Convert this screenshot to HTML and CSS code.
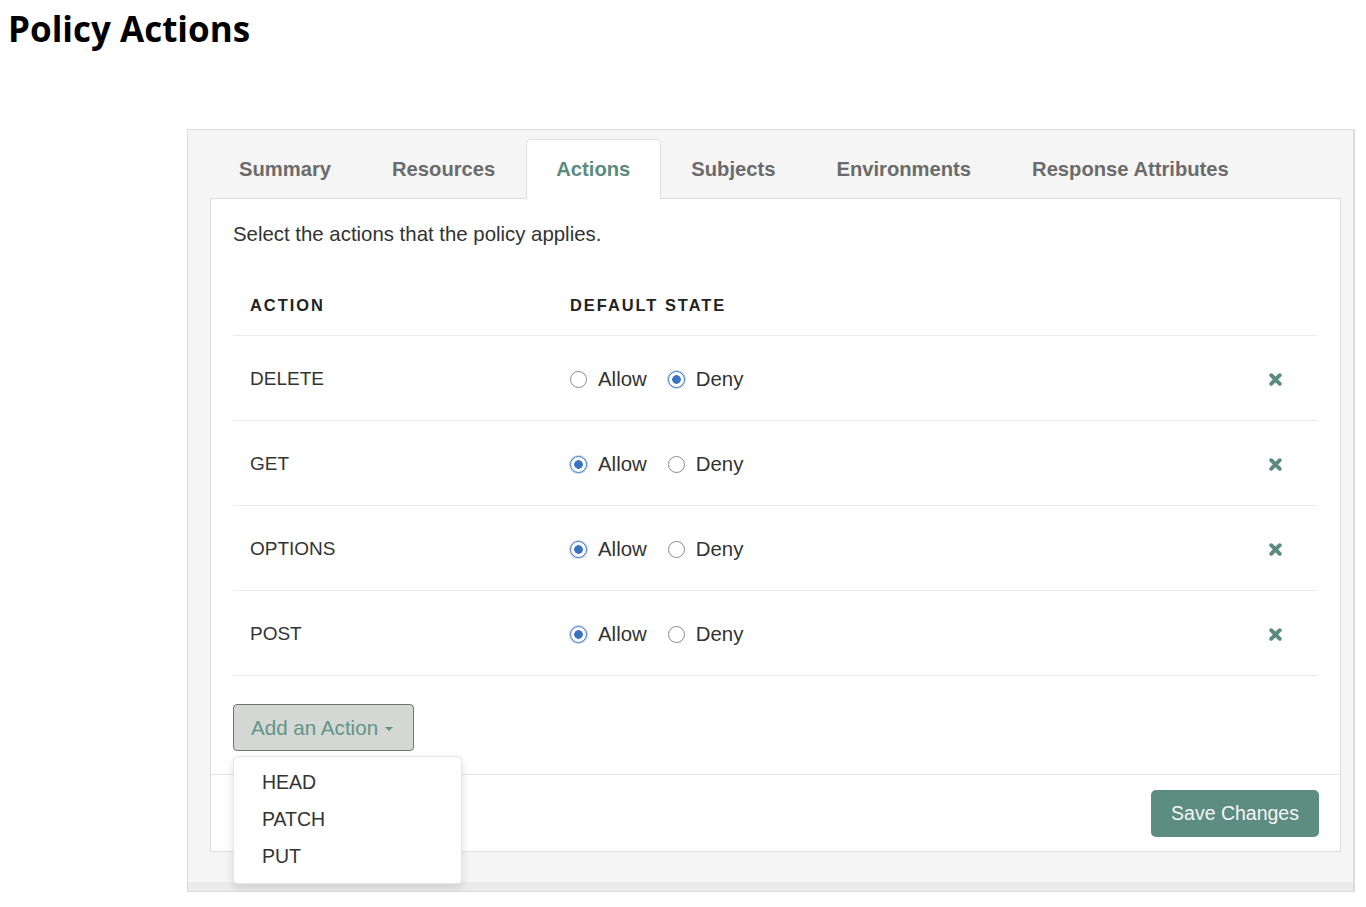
FILE: index.html
```html
<!DOCTYPE html>
<html lang="en">
<head>
<meta charset="utf-8">
<title>Policy Actions</title>
<link rel="stylesheet" href="styles.css">
</head>
<body>
<h1 class="title">Policy Actions</h1>
<div class="frame">
  <ul class="tabs">
    <li class="tab">Summary</li>
    <li class="tab">Resources</li>
    <li class="tab active">Actions</li>
    <li class="tab">Subjects</li>
    <li class="tab">Environments</li>
    <li class="tab">Response Attributes</li>
  </ul>
  <div class="panel">
    <div class="panel-body">
      <p class="intro">Select the actions that the policy applies.</p>
      <div class="table">
        <div class="row head">
          <div class="cell">ACTION</div>
          <div class="cell">DEFAULT STATE</div>
          <div class="cell"></div>
        </div>
        <div class="row">
          <div class="cell name">DELETE</div>
          <div class="cell state">
            <span class="opt"><span class="radio"></span>Allow</span>
            <span class="opt"><span class="radio on"></span>Deny</span>
          </div>
          <div class="cell del"><svg class="x" viewBox="0 0 14 14"><path d="M3 3L11 11M11 3L3 11"/></svg></div>
        </div>
        <div class="row">
          <div class="cell name">GET</div>
          <div class="cell state">
            <span class="opt"><span class="radio on"></span>Allow</span>
            <span class="opt"><span class="radio"></span>Deny</span>
          </div>
          <div class="cell del"><svg class="x" viewBox="0 0 14 14"><path d="M3 3L11 11M11 3L3 11"/></svg></div>
        </div>
        <div class="row">
          <div class="cell name">OPTIONS</div>
          <div class="cell state">
            <span class="opt"><span class="radio on"></span>Allow</span>
            <span class="opt"><span class="radio"></span>Deny</span>
          </div>
          <div class="cell del"><svg class="x" viewBox="0 0 14 14"><path d="M3 3L11 11M11 3L3 11"/></svg></div>
        </div>
        <div class="row">
          <div class="cell name">POST</div>
          <div class="cell state">
            <span class="opt"><span class="radio on"></span>Allow</span>
            <span class="opt"><span class="radio"></span>Deny</span>
          </div>
          <div class="cell del"><svg class="x" viewBox="0 0 14 14"><path d="M3 3L11 11M11 3L3 11"/></svg></div>
        </div>
      </div>
      <div class="add-wrap">
        <button class="add-btn">Add an Action <span class="caret"></span></button>
        <ul class="menu">
          <li>HEAD</li>
          <li>PATCH</li>
          <li>PUT</li>
        </ul>
      </div>
    </div>
    <div class="panel-foot">
      <button class="save-btn">Save Changes</button>
    </div>
  </div>
</div>
</body>
</html>
```

FILE: styles.css
```css
* { box-sizing: border-box; }

body {
  margin: 0;
  padding: 11px 8px 0;
  background: #fff;
  font-family: "Liberation Sans", Arial, sans-serif;
  color: #333;
}

.title {
  margin: 0;
  font-family: "Open Sans", sans-serif;
  font-weight: 700;
  font-size: 35px;
  line-height: 36px;
  color: #000;
}

.frame {
  margin: 82px 0 0 179px;
  width: 1168px;
  background: #f5f5f5;
  border: 1px solid #dcdcdc;
  border-right-width: 2px;
  padding: 9px 12px 39px 22px;
  box-shadow: inset 0 -9px 0 #ebebeb;
}

.tabs {
  list-style: none;
  margin: 0 0 0 -1px;
  padding: 0;
  display: flex;
  position: relative;
  z-index: 1;
}

.tab {
  height: 60px;
  padding: 0 30px 0 29px;
  display: flex;
  align-items: center;
  font-weight: 700;
  font-size: 20.2px;
  color: #6b6b6b;
  border: 1px solid transparent;
  border-bottom: none;
  border-radius: 5px 5px 0 0;
}

.tab.active {
  background: #fff;
  border-color: #dedede;
  color: #5b8b7e;
}

.panel {
  background: #fff;
  border: 1px solid #dedede;
  margin-top: -1px;
}

.panel-body {
  padding: 23px 22px 23px;
}

.intro {
  margin: 0 0 29px;
  font-size: 20.4px;
  line-height: 24px;
  color: #333;
}

.row {
  display: grid;
  grid-template-columns: 320px 1fr 90px;
  align-items: center;
  height: 85px;
  border-bottom: 1px solid #ececec;
}

.row.head {
  height: 61px;
  font-weight: 700;
  font-size: 16.4px;
  letter-spacing: 2px;
  color: #222;
}

.cell {
  padding-left: 17px;
}

.name {
  font-size: 19px;
  color: #333;
  padding-top: 2px;
}

.state {
  display: flex;
  align-items: center;
  gap: 21px;
  font-size: 20.4px;
  color: #333;
  padding-top: 3px;
}

.opt {
  display: flex;
  align-items: center;
  gap: 11px;
}

.radio {
  width: 17px;
  height: 17px;
  border-radius: 50%;
  border: 1.5px solid #8a8a8a;
  background: #fff;
}

.radio.on {
  border: 1.5px solid #3a73c2;
  background: radial-gradient(circle, #3a73c2 0 4px, #fff 4.6px);
  box-shadow: 0 0 0 1px rgba(80, 130, 200, 0.35);
}

.del {
  display: flex;
  justify-content: flex-start;
  padding-left: 40px;
  padding-top: 2px;
}

.x {
  width: 15px;
  height: 15px;
  fill: none;
  stroke: #5b8b7e;
  stroke-width: 3.6;
  stroke-linecap: round;
}

.add-wrap {
  position: relative;
  margin-top: 28px;
  width: 181px;
}

.add-btn {
  display: flex;
  align-items: center;
  gap: 7px;
  height: 47px;
  width: 181px;
  padding: 0 17px;
  background: #d5d7d5;
  border: 1.5px solid #6f7371;
  border-radius: 4px;
  font-family: "Liberation Sans", Arial, sans-serif;
  font-size: 20.6px;
  color: #5e9687;
}

.caret {
  width: 0;
  height: 0;
  border-left: 4px solid transparent;
  border-right: 4px solid transparent;
  border-top: 4px solid #5e9687;
  margin-top: 2px;
}

.menu {
  position: absolute;
  top: calc(100% + 5px);
  left: 0;
  width: 229px;
  margin: 0;
  padding: 7px 0 8px;
  list-style: none;
  background: #fff;
  border: 1px solid #e6e6e6;
  border-radius: 4px;
  box-shadow: 0 4px 10px rgba(0, 0, 0, 0.12);
  z-index: 5;
}

.menu li {
  height: 37px;
  line-height: 37px;
  padding-left: 28px;
  font-size: 19.5px;
  color: #333;
}

.panel-foot {
  border-top: 1px solid #e4e4e4;
  padding: 15px 21px 14px;
  display: flex;
  justify-content: flex-end;
}

.save-btn {
  height: 47px;
  width: 168px;
  background: #5d8c80;
  border: none;
  border-radius: 5px;
  font-family: "Liberation Sans", Arial, sans-serif;
  font-size: 19.5px;
  color: #f4f7f6;
}
```
